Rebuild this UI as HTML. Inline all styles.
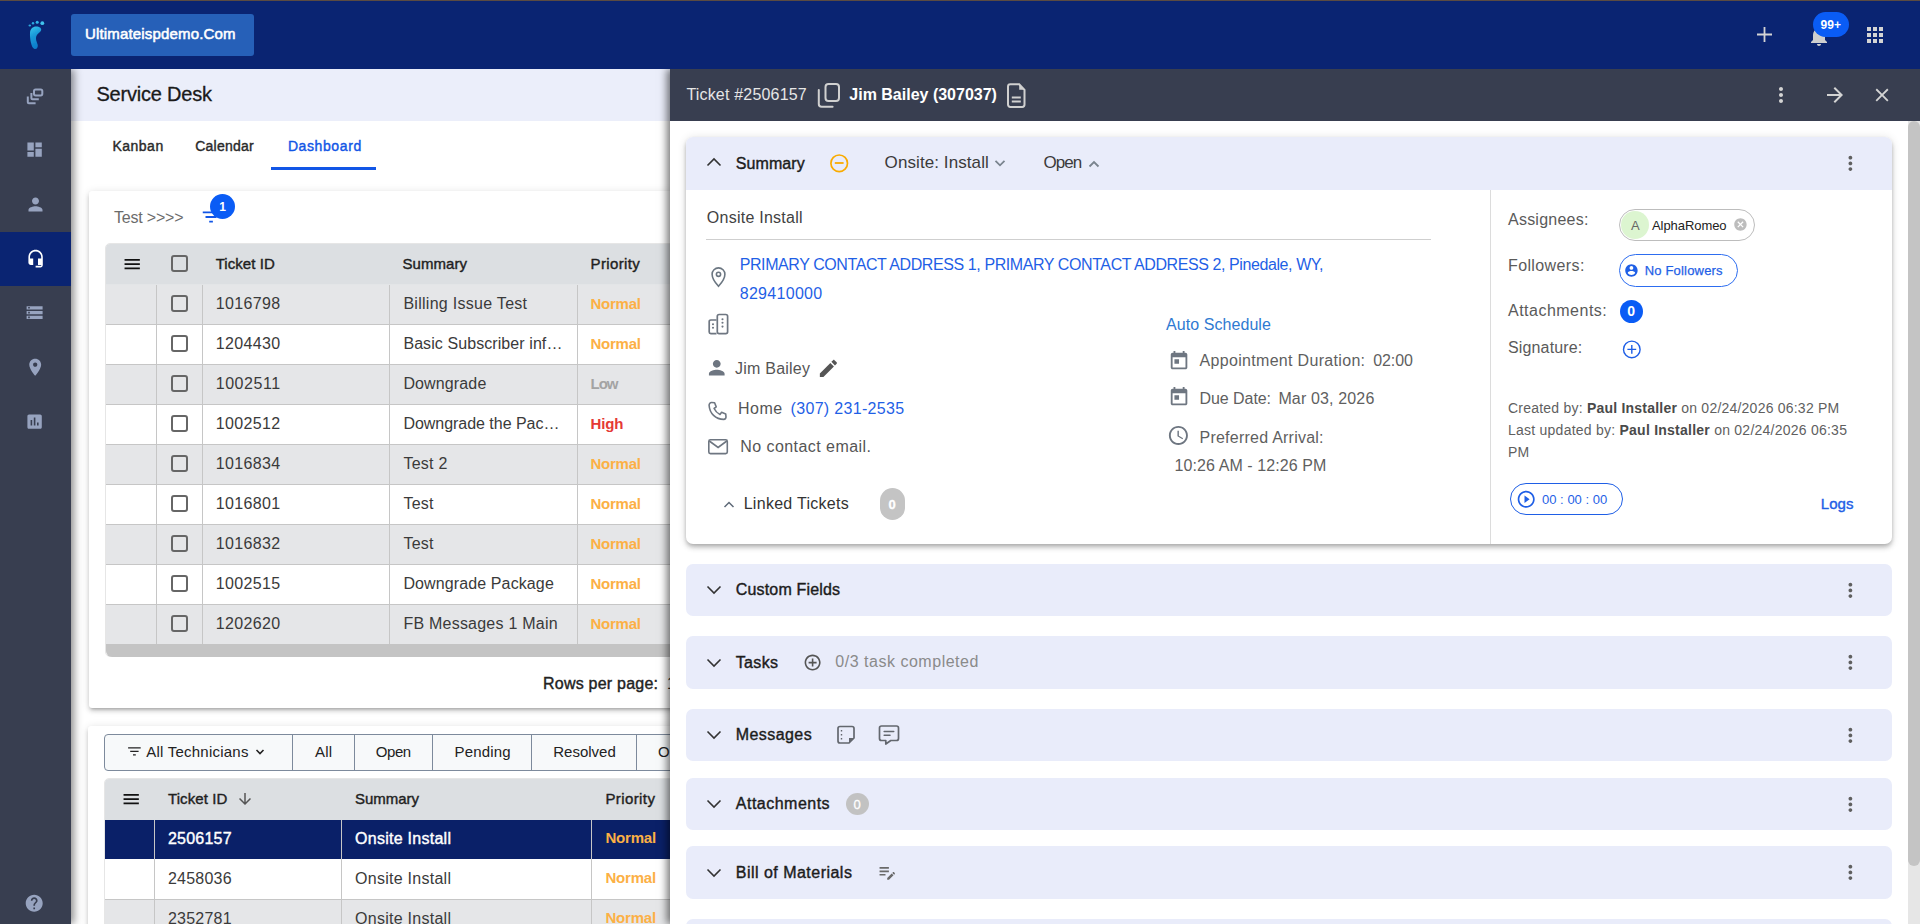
<!DOCTYPE html>
<html><head><meta charset="utf-8"><title>Service Desk</title>
<style>
*{box-sizing:border-box;margin:0;padding:0}
html,body{width:1920px;height:924px;overflow:hidden;background:#fff;font-family:"Liberation Sans",sans-serif;color:#222}
.t{position:absolute;line-height:1;white-space:nowrap}
.a{position:absolute}
svg{display:block;position:absolute}
#topbar{position:absolute;left:0;top:0;width:1920px;height:69px;background:#0a2472;border-top:1px solid #5b4b42}
#side{position:absolute;left:0;top:69px;width:71px;height:855px;background:#383e50;z-index:3;box-shadow:3px 0 8px rgba(0,0,0,0.45);clip-path:inset(0 -30px 0 0)}
.card{position:absolute;background:#fff;box-shadow:0 3px 3px -2px rgba(0,0,0,0.2),0 3px 4px 0 rgba(0,0,0,0.14),0 1px 8px 0 rgba(0,0,0,0.12);border-radius:3px}
.row{position:absolute;height:40px;border-bottom:1px solid #c6c6c6}
.g{background:#e5e6e8}
.w{background:#fff}
.vl{position:absolute;width:1px;background:#c6c6c6}
.cb{position:absolute;width:17px;height:17px;border:2px solid #666;border-radius:3px}
#drawer{position:absolute;left:670px;top:69px;width:1250px;height:855px;background:#fff;box-shadow:-3px 0 8px rgba(0,0,0,0.55);z-index:5;clip-path:inset(0 0 0 -30px)}
#dz{position:absolute;left:0;top:0;width:1920px;height:924px;z-index:6;overflow:hidden}
.acc{position:absolute;left:686px;width:1206px;background:#e9ecfa;border-radius:7px}
.dots{position:absolute}
</style></head>
<body>
<div id="topbar"></div>
<div class="a" style="left:71px;top:14px;width:183px;height:42px;background:#2660b8;border-radius:3px"></div>
<div class="t" style="left:85px;top:26px;font-size:15px;color:#fff;letter-spacing:0.164px;-webkit-text-stroke:0.4px #fff;-webkit-text-stroke:0.55px #fff">Ultimateispdemo.Com</div>
<svg style="left:24px;top:16px" width="24" height="36" viewBox="0 0 24 36">
<defs><linearGradient id="lg" x1="0" y1="0" x2="0.3" y2="1"><stop offset="0" stop-color="#3cc8ee"/><stop offset="0.45" stop-color="#1a9ad8"/><stop offset="1" stop-color="#0c7ccc"/></linearGradient>
<filter id="bl" x="-20%" y="-20%" width="140%" height="140%"><feGaussianBlur stdDeviation="0.35"/></filter></defs>
<g filter="url(#bl)">
<ellipse cx="5.8" cy="9.5" rx="1.3" ry="0.9" fill="#2fa6dc"/><circle cx="9" cy="7.3" r="1.2" fill="#2aa9e0"/><circle cx="13.2" cy="6.2" r="1.5" fill="#33b6e8"/><circle cx="18.3" cy="7.2" r="1.9" fill="#40c3ee"/>
<path d="M6 16.8C6.3 12.5 9.2 10.4 12.2 10.5c3.3.1 5.3 1.6 5 3.6-.3 1.6-1.8 2.3-3.2 3.6-1.7 1.6-2.4 3.8-1.8 6.5.5 2.2 1.6 3.7 1.6 5.6 0 2.3-1.6 3.6-3.2 3.2-1.8-.5-2.8-2.8-3.6-6C6.2 23.8 5.8 20 6 16.8z" fill="url(#lg)"/>
</g>
</svg>
<svg style="left:1756px;top:26px" width="17" height="17" viewBox="0 0 17 17"><path d="M1 8.5h15M8.5 1v15" stroke="#d4d4d4" stroke-width="1.8"/></svg>
<svg style="left:1807px;top:24px" width="24" height="24" viewBox="0 0 24 24"><path fill="#cfcfcf" d="M12 22c1.1 0 2-.9 2-2h-4c0 1.1.89 2 2 2zm6-6v-5c0-3.07-1.64-5.64-4.5-6.32V4c0-.83-.67-1.5-1.5-1.5s-1.5.67-1.5 1.5v.68C7.63 5.36 6 7.92 6 11v5l-2 2v1h16v-1l-2-2z"/></svg>
<div class="a" style="left:1813px;top:12px;width:36px;height:25px;border-radius:12.5px;background:#0a5cf5"></div>
<div class="t" style="left:1820.6px;top:19px;font-size:12px;color:#fff;font-weight:bold;letter-spacing:0.026px">99+</div>
<svg style="left:1863px;top:23px" width="24" height="24" viewBox="0 0 24 24"><path fill="#d4d4d4" d="M4 8h4V4H4v4zm6 12h4v-4h-4v4zm-6 0h4v-4H4v4zm0-6h4v-4H4v4zm6 0h4v-4h-4v4zm6-10v4h4V4h-4zm-6 4h4V4h-4v4zm6 6h4v-4h-4v4zm0 6h4v-4h-4v4z"/></svg>
<div id="side">
<div class="a" style="left:0;top:163px;width:71px;height:54px;background:#0a2472"></div>
<svg style="left:26px;top:18px" width="18" height="18" viewBox="0 0 18 18"><g fill="none" stroke="#97a3bf" stroke-width="2" stroke-linecap="butt"><rect x="8" y="2.4" width="8.3" height="6" rx="1.6"/><path d="M5.4 6v5.2c0 .6.4 1 1 1h6.4"/><path d="M1.8 9.5v5.8c0 .6.4 1 1 1h6.8"/></g></svg>
<svg style="left:23px;top:69px;transform:scale(0.8);transform-origin:0 0;left:25.4px;top:71.4px" width="24" height="24" viewBox="0 0 24 24"><path fill="#97a3bf" d="M3 13h8V3H3v10zm0 8h8v-6H3v6zm10 0h8V11h-8v10zm0-18v6h8V3h-8z"/></svg>
<svg style="left:23px;top:123px;transform:scale(0.875);transform-origin:0 0;left:24.5px;top:124.5px" width="24" height="24" viewBox="0 0 24 24"><path fill="#97a3bf" d="M12 12c2.21 0 4-1.79 4-4s-1.79-4-4-4-4 1.79-4 4 1.79 4 4 4zm0 2c-2.67 0-8 1.34-8 4v2h16v-2c0-2.66-5.33-4-8-4z"/></svg>
<svg style="left:23px;top:177px;transform:scale(0.8);transform-origin:0 0;left:25.5px;top:179.5px" width="24" height="24" viewBox="0 0 24 24"><path fill="#ffffff" d="M12 1c-4.97 0-9 4.03-9 9v7c0 1.66 1.34 3 3 3h3v-8H5v-2c0-3.87 3.13-7 7-7s7 3.13 7 7v2h-4v8h4v1h-7v2h6c1.66 0 3-1.34 3-3V10c0-4.97-4.03-9-9-9z"/></svg>
<svg style="left:23px;top:231px;transform:scale(0.8);transform-origin:0 0;left:25.3px;top:234px" width="24" height="24" viewBox="0 0 24 24"><path fill="#97a3bf" d="M2 20h20v-4H2v4zm2-3h2v2H4v-2zM2 4v4h20V4H2zm4 3H4V5h2v2zm-4 7h20v-4H2v4zm2-3h2v2H4v-2z"/></svg>
<svg style="left:23px;top:285px;transform:scale(0.85);transform-origin:0 0;left:24.8px;top:288.4px" width="24" height="24" viewBox="0 0 24 24"><path fill="#97a3bf" d="M12 2C8.13 2 5 5.13 5 9c0 5.25 7 13 7 13s7-7.75 7-13c0-3.87-3.13-7-7-7zm0 9.5c-1.38 0-2.5-1.12-2.5-2.5s1.12-2.5 2.5-2.5 2.5 1.12 2.5 2.5-1.12 2.5-2.5 2.5z"/></svg>
<svg style="left:23px;top:339px;transform:scale(0.8);transform-origin:0 0;left:25.2px;top:342.5px" width="24" height="24" viewBox="0 0 24 24"><path fill="#97a3bf" d="M19 3H5c-1.1 0-2 .9-2 2v14c0 1.1.9 2 2 2h14c1.1 0 2-.9 2-2V5c0-1.1-.9-2-2-2zM9 17H7v-7h2v7zm4 0h-2V7h2v10zm4 0h-2v-4h2v4z"/></svg>
<svg style="left:23px;top:823px;transform:scale(0.85);transform-origin:0 0;left:23.8px;top:824.3px" width="24" height="24" viewBox="0 0 24 24"><path fill="#97a3bf" d="M12 2C6.48 2 2 6.48 2 12s4.48 10 10 10 10-4.48 10-10S17.52 2 12 2zm1 17h-2v-2h2v2zm2.07-7.75l-.9.92C13.45 12.9 13 13.5 13 15h-2v-.5c0-1.1.45-2.1 1.17-2.83l1.24-1.26c.37-.36.59-.86.59-1.41 0-1.1-.9-2-2-2s-2 .9-2 2H8c0-2.21 1.79-4 4-4s4 1.79 4 4c0 .88-.36 1.68-.93 2.25z"/></svg>
</div>
<div class="a" style="left:71px;top:69px;width:1849px;height:52px;background:#ebeefa"></div>
<div class="t" style="left:96.4px;top:84px;font-size:20px;color:#1a1a1a;letter-spacing:-0.192px;-webkit-text-stroke:0.4px #1a1a1a;-webkit-text-stroke:0.3px #1a1a1a">Service Desk</div>
<div class="t" style="left:112.4px;top:139px;font-size:14px;color:#2a2a2a;letter-spacing:0.504px;-webkit-text-stroke:0.4px #2a2a2a">Kanban</div>
<div class="t" style="left:195.2px;top:139px;font-size:14px;color:#2a2a2a;letter-spacing:0.236px;-webkit-text-stroke:0.4px #2a2a2a">Calendar</div>
<div class="t" style="left:287.9px;top:139px;font-size:14px;color:#1256e6;letter-spacing:0.600px;-webkit-text-stroke:0.4px #1256e6">Dashboard</div>
<div class="a" style="left:271px;top:167px;width:105px;height:3px;background:#1256e6"></div>
<div class="card" style="left:89px;top:191px;width:1000px;height:517px"></div>
<div class="t" style="left:114px;top:210px;font-size:16px;color:#6b6b6b;letter-spacing:-0.200px">Test &gt;&gt;&gt;&gt;</div>
<svg style="left:201px;top:205px;transform:scale(0.92);transform-origin:0 0;left:200.2px;top:206.3px" width="24" height="24" viewBox="0 0 24 24"><path fill="#1256e6" d="M10 18h4v-2h-4v2zM3 6v2h18V6H3zm3 7h12v-2H6v2z"/></svg>
<div class="a" style="left:210px;top:194px;width:25px;height:25px;border-radius:50%;background:#0a5cf5"></div>
<div class="t" style="left:219.2px;top:201px;font-size:12px;color:#fff;font-weight:bold">1</div>
<div class="a" style="left:105px;top:243px;width:702px;height:414px;border:1px solid #e6e6e6;border-radius:5px"></div>
<div class="a" style="left:106px;top:244px;width:700px;height:40px;background:#dcdfe2;border-radius:4px 4px 0 0"></div>
<div class="a" style="left:106px;top:284px;width:700px;height:1px;background:#e3e5e7"></div>
<svg style="left:120px;top:252px;transform:scale(0.85);transform-origin:0 0;left:121.8px;top:254.2px" width="24" height="24" viewBox="0 0 24 24"><path fill="#111" d="M3 18h18v-2H3v2zm0-5h18v-2H3v2zm0-7v2h18V6H3z"/></svg>
<div class="cb" style="left:171px;top:255px"></div>
<div class="t" style="left:215.7px;top:256px;font-size:15px;color:#1f1f1f;letter-spacing:0.052px;-webkit-text-stroke:0.4px #1f1f1f">Ticket ID</div>
<div class="t" style="left:402.5px;top:256px;font-size:15px;color:#1f1f1f;letter-spacing:0.054px;-webkit-text-stroke:0.4px #1f1f1f">Summary</div>
<div class="t" style="left:590.5px;top:256px;font-size:15px;color:#1f1f1f;letter-spacing:0.376px;-webkit-text-stroke:0.4px #1f1f1f">Priority</div>
<div class="row g" style="left:106px;top:285px;width:700px"></div>
<div class="cb" style="left:171px;top:295px"></div>
<div class="t" style="left:215.7px;top:296px;font-size:16px;color:#3a3a3a;letter-spacing:0.352px">1016798</div>
<div class="t" style="left:403.4px;top:296px;font-size:16px;color:#3a3a3a;letter-spacing:0.281px">Billing Issue Test</div>
<div class="t" style="left:590.5px;top:296px;font-size:15px;color:#fcb045;font-weight:bold;letter-spacing:-0.242px">Normal</div>
<div class="row w" style="left:106px;top:325px;width:700px"></div>
<div class="cb" style="left:171px;top:335px"></div>
<div class="t" style="left:215.7px;top:336px;font-size:16px;color:#3a3a3a;letter-spacing:0.352px">1204430</div>
<div class="t" style="left:403.4px;top:336px;font-size:16px;color:#3a3a3a;letter-spacing:0.080px">Basic Subscriber inf…</div>
<div class="t" style="left:590.5px;top:336px;font-size:15px;color:#fcb045;font-weight:bold;letter-spacing:-0.242px">Normal</div>
<div class="row g" style="left:106px;top:365px;width:700px"></div>
<div class="cb" style="left:171px;top:375px"></div>
<div class="t" style="left:215.7px;top:376px;font-size:16px;color:#3a3a3a;letter-spacing:0.549px">1002511</div>
<div class="t" style="left:403.4px;top:376px;font-size:16px;color:#3a3a3a;letter-spacing:0.134px">Downgrade</div>
<div class="t" style="left:590.5px;top:376px;font-size:15px;color:#a3a3a3;font-weight:bold;letter-spacing:-1.013px">Low</div>
<div class="row w" style="left:106px;top:405px;width:700px"></div>
<div class="cb" style="left:171px;top:415px"></div>
<div class="t" style="left:215.7px;top:416px;font-size:16px;color:#3a3a3a;letter-spacing:0.352px">1002512</div>
<div class="t" style="left:403.4px;top:416px;font-size:16px;color:#3a3a3a;letter-spacing:-0.031px">Downgrade the Pac…</div>
<div class="t" style="left:590.5px;top:416px;font-size:15px;color:#e53935;font-weight:bold;letter-spacing:-0.121px">High</div>
<div class="row g" style="left:106px;top:445px;width:700px"></div>
<div class="cb" style="left:171px;top:455px"></div>
<div class="t" style="left:215.7px;top:456px;font-size:16px;color:#3a3a3a;letter-spacing:0.352px">1016834</div>
<div class="t" style="left:403.4px;top:456px;font-size:16px;color:#3a3a3a;letter-spacing:0.242px">Test 2</div>
<div class="t" style="left:590.5px;top:456px;font-size:15px;color:#fcb045;font-weight:bold;letter-spacing:-0.242px">Normal</div>
<div class="row w" style="left:106px;top:485px;width:700px"></div>
<div class="cb" style="left:171px;top:495px"></div>
<div class="t" style="left:215.7px;top:496px;font-size:16px;color:#3a3a3a;letter-spacing:0.352px">1016801</div>
<div class="t" style="left:403.4px;top:496px;font-size:16px;color:#3a3a3a;letter-spacing:0.267px">Test</div>
<div class="t" style="left:590.5px;top:496px;font-size:15px;color:#fcb045;font-weight:bold;letter-spacing:-0.242px">Normal</div>
<div class="row g" style="left:106px;top:525px;width:700px"></div>
<div class="cb" style="left:171px;top:535px"></div>
<div class="t" style="left:215.7px;top:536px;font-size:16px;color:#3a3a3a;letter-spacing:0.352px">1016832</div>
<div class="t" style="left:403.4px;top:536px;font-size:16px;color:#3a3a3a;letter-spacing:0.267px">Test</div>
<div class="t" style="left:590.5px;top:536px;font-size:15px;color:#fcb045;font-weight:bold;letter-spacing:-0.242px">Normal</div>
<div class="row w" style="left:106px;top:565px;width:700px"></div>
<div class="cb" style="left:171px;top:575px"></div>
<div class="t" style="left:215.7px;top:576px;font-size:16px;color:#3a3a3a;letter-spacing:0.352px">1002515</div>
<div class="t" style="left:403.4px;top:576px;font-size:16px;color:#3a3a3a;letter-spacing:0.116px">Downgrade Package</div>
<div class="t" style="left:590.5px;top:576px;font-size:15px;color:#fcb045;font-weight:bold;letter-spacing:-0.242px">Normal</div>
<div class="row g" style="left:106px;top:605px;width:700px"></div>
<div class="cb" style="left:171px;top:615px"></div>
<div class="t" style="left:215.7px;top:616px;font-size:16px;color:#3a3a3a;letter-spacing:0.352px">1202620</div>
<div class="t" style="left:403.4px;top:616px;font-size:16px;color:#3a3a3a;letter-spacing:0.230px">FB Messages 1 Main</div>
<div class="t" style="left:590.5px;top:616px;font-size:15px;color:#fcb045;font-weight:bold;letter-spacing:-0.242px">Normal</div>
<div class="vl" style="left:156px;top:285px;height:359px"></div>
<div class="vl" style="left:202px;top:285px;height:359px"></div>
<div class="vl" style="left:389px;top:285px;height:359px"></div>
<div class="vl" style="left:577px;top:285px;height:359px"></div>
<div class="a" style="left:106px;top:644px;width:700px;height:13px;background:#c4c4c4;border-radius:0 0 0 6px"></div>
<div class="t" style="left:543px;top:676px;font-size:16px;color:#222;letter-spacing:0.222px;-webkit-text-stroke:0.4px #222">Rows per page:</div>
<div class="t" style="left:667px;top:676px;font-size:16px;color:#222">10</div>
<div class="card" style="left:88px;top:726px;width:1000px;height:400px"></div>
<div class="a" style="left:104px;top:734px;width:700px;height:37px;border:1px solid #7d8a9c;border-radius:4px;background:#f7f9fa"></div>
<div class="a" style="left:292px;top:734px;width:1px;height:37px;background:#7d8a9c"></div>
<div class="a" style="left:354px;top:734px;width:1px;height:37px;background:#7d8a9c"></div>
<div class="a" style="left:432px;top:734px;width:1px;height:37px;background:#7d8a9c"></div>
<div class="a" style="left:531px;top:734px;width:1px;height:37px;background:#7d8a9c"></div>
<div class="a" style="left:636px;top:734px;width:1px;height:37px;background:#7d8a9c"></div>
<svg style="left:125px;top:739px;transform:scale(0.7);transform-origin:0 0;left:125.5px;top:743px" width="24" height="24" viewBox="0 0 24 24"><path fill="#222" d="M10 18h4v-2h-4v2zM3 6v2h18V6H3zm3 7h12v-2H6v2z"/></svg>
<div class="t" style="left:146.3px;top:744px;font-size:15px;color:#222;letter-spacing:0.228px">All Technicians</div>
<svg style="left:254px;top:746px" width="12" height="12" viewBox="0 0 12 12"><path d="M2.5 4l3.5 3.5L9.5 4" fill="none" stroke="#222" stroke-width="1.6"/></svg>
<div class="t" style="left:315px;top:744px;font-size:15px;color:#222;letter-spacing:0.181px">All</div>
<div class="t" style="left:375.8px;top:744px;font-size:15px;color:#222;letter-spacing:-0.451px">Open</div>
<div class="t" style="left:454.6px;top:744px;font-size:15px;color:#222;letter-spacing:0.149px">Pending</div>
<div class="t" style="left:553.3px;top:744px;font-size:15px;color:#222;letter-spacing:-0.013px">Resolved</div>
<div class="t" style="left:658px;top:744px;font-size:15px;color:#222">On Hold</div>
<div class="a" style="left:104px;top:778px;width:702px;height:200px;border:1px solid #e6e6e6;border-radius:5px"></div>
<div class="a" style="left:105px;top:779px;width:700px;height:41px;background:#dcdfe2;border-radius:4px 4px 0 0"></div>
<svg style="left:120px;top:788px;transform:scale(0.85);transform-origin:0 0;left:120.5px;top:789px" width="24" height="24" viewBox="0 0 24 24"><path fill="#111" d="M3 18h18v-2H3v2zm0-5h18v-2H3v2zm0-7v2h18V6H3z"/></svg>
<div class="t" style="left:168px;top:791px;font-size:15px;color:#1f1f1f;letter-spacing:0.090px;-webkit-text-stroke:0.4px #1f1f1f">Ticket ID</div>
<svg style="left:233px;top:787px;transform:scale(0.75);transform-origin:0 0;left:236px;top:790px" width="24" height="24" viewBox="0 0 24 24"><path fill="#555" d="M20 12l-1.41-1.41L13 16.17V4h-2v12.17l-5.58-5.59L4 12l8 8 8-8z"/></svg>
<div class="t" style="left:355px;top:791px;font-size:15px;color:#1f1f1f;letter-spacing:-0.012px;-webkit-text-stroke:0.4px #1f1f1f">Summary</div>
<div class="t" style="left:605.4px;top:791px;font-size:15px;color:#1f1f1f;letter-spacing:0.404px;-webkit-text-stroke:0.4px #1f1f1f">Priority</div>
<div class="row" style="left:105px;top:820px;width:700px;background:#0a2068;border-bottom-color:#fff"></div>
<div class="t" style="left:168px;top:831px;font-size:16px;color:#fff;letter-spacing:0.218px;-webkit-text-stroke:0.4px #fff">2506157</div>
<div class="t" style="left:355px;top:831px;font-size:16px;color:#fff;letter-spacing:0.267px;-webkit-text-stroke:0.4px #fff">Onsite Install</div>
<div class="t" style="left:605.4px;top:830px;font-size:15px;color:#fcb045;font-weight:bold;letter-spacing:-0.182px">Normal</div>
<div class="row w" style="left:105px;top:860px;width:700px"></div>
<div class="t" style="left:168px;top:871px;font-size:16px;color:#3a3a3a;letter-spacing:0.218px">2458036</div>
<div class="t" style="left:355px;top:871px;font-size:16px;color:#3a3a3a;letter-spacing:0.267px">Onsite Install</div>
<div class="t" style="left:605.4px;top:870px;font-size:15px;color:#fcb045;font-weight:bold;letter-spacing:-0.182px">Normal</div>
<div class="row g" style="left:105px;top:900px;width:700px"></div>
<div class="t" style="left:168px;top:911px;font-size:16px;color:#3a3a3a;letter-spacing:0.218px">2352781</div>
<div class="t" style="left:355px;top:911px;font-size:16px;color:#3a3a3a;letter-spacing:0.267px">Onsite Install</div>
<div class="t" style="left:605.4px;top:910px;font-size:15px;color:#fcb045;font-weight:bold;letter-spacing:-0.182px">Normal</div>
<div class="vl" style="left:154px;top:820px;height:110px"></div>
<div class="vl" style="left:341px;top:820px;height:110px"></div>
<div class="vl" style="left:591px;top:820px;height:110px"></div>
<div id="drawer"></div>
<div id="dz">
<div class="a" style="left:670px;top:69px;width:1250px;height:52px;background:#383e50"></div>
<div class="t" style="left:686.4px;top:87px;font-size:16px;color:#e6e6e6;letter-spacing:0.185px">Ticket #2506157</div>
<svg style="left:816px;top:82px" width="26" height="27" viewBox="0 0 26 27"><g fill="none" stroke="#d0d0d0" stroke-width="2" stroke-linecap="round"><rect x="9.5" y="2" width="13.5" height="17" rx="3"/><path d="M2.8 8v14c0 1.6 1.1 2.8 2.8 2.8h11"/></g></svg>
<div class="t" style="left:849.3px;top:87px;font-size:16px;color:#fff;font-weight:bold;letter-spacing:-0.001px">Jim Bailey (307037)</div>
<svg style="left:1006px;top:82px" width="21" height="27" viewBox="0 0 21 27"><path d="M4.3 2.2h8.9l5.3 5.6v14.8c0 1.3-1 2.4-2.3 2.4H4.3c-1.3 0-2.3-1.1-2.3-2.4V4.6c0-1.4 1-2.4 2.3-2.4z" fill="none" stroke="#d0d0d0" stroke-width="2"/><path d="M13.2 2.2v5.6h5.3z" fill="#d0d0d0"/><path d="M5.8 15.5h9M5.8 19.5h9" stroke="#d0d0d0" stroke-width="2"/></svg>
<svg style="left:1769px;top:83px" width="24" height="24" viewBox="0 0 24 24"><path fill="#d4d4d4" d="M12 8c1.1 0 2-.9 2-2s-.9-2-2-2-2 .9-2 2 .9 2 2 2zm0 2c-1.1 0-2 .9-2 2s.9 2 2 2 2-.9 2-2-.9-2-2-2zm0 6c-1.1 0-2 .9-2 2s.9 2 2 2 2-.9 2-2-.9-2-2-2z"/></svg>
<svg style="left:1823px;top:83px" width="24" height="24" viewBox="0 0 24 24"><path fill="#d4d4d4" d="M12 4l-1.41 1.41L16.17 11H4v2h12.17l-5.58 5.59L12 20l8-8z"/></svg>
<svg style="left:1870px;top:83px;transform:scale(0.92);transform-origin:0 0;left:1871px;top:84.4px" width="24" height="24" viewBox="0 0 24 24"><path fill="#d4d4d4" d="M19 6.41L17.59 5 12 10.59 6.41 5 5 6.41 10.59 12 5 17.59 6.41 19 12 13.41 17.59 19 19 17.59 13.41 12z"/></svg>
<div class="a" style="left:1908px;top:121px;width:12px;height:803px;background:#e6e6e6"></div>
<div class="a" style="left:1908px;top:121px;width:12px;height:745px;background:#c4c4c4;border-radius:6px"></div>
<div class="a" style="left:686px;top:137px;width:1206px;height:407px;background:#fff;border-radius:7px;box-shadow:0 2px 4px -1px rgba(0,0,0,0.2),0 4px 5px 0 rgba(0,0,0,0.14),0 1px 10px 0 rgba(0,0,0,0.12)"></div>
<div class="a" style="left:686px;top:137px;width:1206px;height:53px;background:#e9ecfa;border-radius:7px 7px 0 0"></div>
<svg style="left:704px;top:155px" width="20" height="14" viewBox="0 0 20 14"><path d="M3.5 10.5L10 4l6.5 6.5" fill="none" stroke="#333" stroke-width="1.6"/></svg>
<div class="t" style="left:735.7px;top:156px;font-size:16px;color:#1c1c1c;letter-spacing:0.108px;-webkit-text-stroke:0.4px #1c1c1c">Summary</div>
<svg style="left:828px;top:152px" width="23" height="23" viewBox="0 0 23 23"><circle cx="11.2" cy="11.3" r="8.3" fill="none" stroke="#f9ab00" stroke-width="1.7"/><path d="M6.8 11h8.8" stroke="#f9ab00" stroke-width="1.8"/></svg>
<div class="t" style="left:884.6px;top:154px;font-size:17px;color:#3b3b3b;letter-spacing:0.085px">Onsite: Install</div>
<svg style="left:993px;top:158px" width="14" height="10" viewBox="0 0 14 10"><path d="M2.5 2.8l4.5 4.5 4.5-4.5" fill="none" stroke="#7a848e" stroke-width="1.8"/></svg>
<div class="t" style="left:1043.4px;top:154px;font-size:17px;color:#3b3b3b;letter-spacing:-0.944px">Open</div>
<svg style="left:1087px;top:157px" width="14" height="12" viewBox="0 0 14 12"><path d="M2.5 9.5l4.5-4.5 4.5 4.5" fill="none" stroke="#7a848e" stroke-width="1.8"/></svg>
<svg style="left:1838px;top:151px;transform:scale(0.95);transform-origin:0 0;left:1838.6px;top:151.6px" width="24" height="24" viewBox="0 0 24 24"><path fill="#5f5f5f" d="M12 8c1.1 0 2-.9 2-2s-.9-2-2-2-2 .9-2 2 .9 2 2 2zm0 2c-1.1 0-2 .9-2 2s.9 2 2 2 2-.9 2-2-.9-2-2-2zm0 6c-1.1 0-2 .9-2 2s.9 2 2 2 2-.9 2-2-.9-2-2-2z"/></svg>
<div class="t" style="left:706.8px;top:210px;font-size:16px;color:#424242;letter-spacing:0.252px">Onsite Install</div>
<div class="a" style="left:706px;top:239px;width:725px;height:1px;background:#cfcfcf"></div>
<svg style="left:709px;top:266px" width="19" height="23" viewBox="0 0 19 23"><path d="M9.5 20.3S3.1 13.4 3.1 8.3a6.4 6.4 0 0 1 12.8 0c0 5.1-6.4 12-6.4 12z" fill="none" stroke="#6b7681" stroke-width="1.6"/><circle cx="9.5" cy="8.3" r="2.1" fill="none" stroke="#6b7681" stroke-width="1.6"/></svg>
<div class="t" style="left:739.7px;top:257px;font-size:16px;color:#1f5fe6;letter-spacing:-0.410px">PRIMARY CONTACT ADDRESS 1, PRIMARY CONTACT ADDRESS 2, Pinedale, WY,</div>
<div class="t" style="left:739.7px;top:286px;font-size:16px;color:#1f5fe6;letter-spacing:0.302px">829410000</div>
<svg style="left:707px;top:313px" width="23" height="22" viewBox="0 0 23 22"><g fill="none" stroke="#6e7681" stroke-width="1.7"><path d="M9.5 7H3.8c-.9 0-1.6.7-1.6 1.6v10.4c0 .9.7 1.6 1.6 1.6h5.7"/><rect x="10.3" y="1.5" width="10.3" height="19.1" rx="1.8"/></g><g fill="#6e7681"><circle cx="6" cy="11.2" r="1.05"/><circle cx="6" cy="14.8" r="1.05"/><circle cx="15.5" cy="6.2" r="1.05"/><circle cx="15.5" cy="9.8" r="1.05"/><circle cx="15.5" cy="13.6" r="1.05"/></g></svg>
<div class="t" style="left:1166px;top:317px;font-size:16px;color:#2f7ad2;letter-spacing:0.068px">Auto Schedule</div>
<svg style="left:704px;top:357px;transform:scale(0.98);transform-origin:0 0;left:704.5px;top:356.2px" width="24" height="24" viewBox="0 0 24 24"><path fill="#6e7681" d="M12 12c2.21 0 4-1.79 4-4s-1.79-4-4-4-4 1.79-4 4 1.79 4 4 4zm0 2c-2.67 0-8 1.34-8 4v2h16v-2c0-2.66-5.33-4-8-4z"/></svg>
<div class="t" style="left:735px;top:361px;font-size:16px;color:#555;letter-spacing:0.233px">Jim Bailey</div>
<svg style="left:816px;top:357px;transform:scale(0.95);transform-origin:0 0;left:816.5px;top:357.2px" width="24" height="24" viewBox="0 0 24 24"><path fill="#555" d="M3 17.25V21h3.75L17.81 9.94l-3.75-3.75L3 17.25zM20.71 7.04c.39-.39.39-1.02 0-1.41l-2.34-2.34c-.39-.39-1.02-.39-1.41 0l-1.83 1.83 3.75 3.75 1.83-1.83z"/></svg>
<svg style="left:706px;top:400px" width="23" height="23" viewBox="0 0 23 23"><path d="M5.6 2.5l3 .3 1.6 4.1-2.1 1.6c1.2 2.6 3.3 4.7 5.9 5.9l1.6-2.1 4.1 1.6.3 3c.1 1.3-.9 2.5-2.2 2.5C9.6 19.4 3.6 13.4 3.1 5.2c0-1.4 1.2-2.8 2.5-2.7z" fill="none" stroke="#6e7681" stroke-width="1.6" stroke-linejoin="round"/></svg>
<div class="t" style="left:738px;top:401px;font-size:16px;color:#555;letter-spacing:0.506px">Home</div>
<div class="t" style="left:790.6px;top:401px;font-size:16px;color:#1f5fe6;letter-spacing:0.314px">(307) 231-2535</div>
<svg style="left:706px;top:437px" width="24" height="19" viewBox="0 0 24 19"><rect x="2.8" y="2.8" width="18.5" height="13.8" rx="1.6" fill="none" stroke="#6e7681" stroke-width="1.6"/><path d="M3.3 4l8.8 6.4L20.8 4" fill="none" stroke="#6e7681" stroke-width="1.6"/></svg>
<div class="t" style="left:740.2px;top:439px;font-size:16px;color:#555;letter-spacing:0.452px">No contact email.</div>
<svg style="left:722px;top:498px" width="14" height="12" viewBox="0 0 14 12"><path d="M2.5 9l4.5-4.5L11.5 9" fill="none" stroke="#5f6a78" stroke-width="1.5"/></svg>
<div class="t" style="left:743.7px;top:496px;font-size:16px;color:#333;letter-spacing:0.279px">Linked Tickets</div>
<div class="a" style="left:880px;top:488px;width:25px;height:32px;border-radius:12.5px;background:#c4c4c4"></div>
<div class="t" style="left:888.6px;top:498px;font-size:13px;color:#fff;font-weight:bold;-webkit-text-stroke:0.3px #fff">0</div>
<svg style="left:1166px;top:348px;transform:scale(0.92);transform-origin:0 0;left:1167.5px;top:350px" width="24" height="24" viewBox="0 0 24 24"><path fill="#6e7681" d="M19 3h-1V1h-2v2H8V1H6v2H5c-1.11 0-1.99.9-1.99 2L3 19c0 1.1.89 2 2 2h14c1.1 0 2-.9 2-2V5c0-1.1-.9-2-2-2zm0 16H5V8h14v11zM7 10h5v5H7z"/></svg>
<div class="t" style="left:1199.5px;top:353px;font-size:16px;color:#5f5f5f;letter-spacing:0.317px">Appointment Duration:</div>
<div class="t" style="left:1373.2px;top:353px;font-size:16px;color:#5f5f5f;letter-spacing:-0.085px">02:00</div>
<svg style="left:1166px;top:386px;transform:scale(0.92);transform-origin:0 0;left:1167.5px;top:386.3px" width="24" height="24" viewBox="0 0 24 24"><path fill="#6e7681" d="M19 3h-1V1h-2v2H8V1H6v2H5c-1.11 0-1.99.9-1.99 2L3 19c0 1.1.89 2 2 2h14c1.1 0 2-.9 2-2V5c0-1.1-.9-2-2-2zm0 16H5V8h14v11zM7 10h5v5H7z"/></svg>
<div class="t" style="left:1199.5px;top:391px;font-size:16px;color:#5f5f5f;letter-spacing:-0.062px">Due Date:</div>
<div class="t" style="left:1278.4px;top:391px;font-size:16px;color:#5f5f5f;letter-spacing:0.147px">Mar 03, 2026</div>
<svg style="left:1166px;top:423px;transform:scale(0.95);transform-origin:0 0;left:1166.6px;top:423.5px" width="24" height="24" viewBox="0 0 24 24"><path fill="#6e7681" d="M11.99 2C6.47 2 2 6.48 2 12s4.47 10 9.99 10C17.52 22 22 17.52 22 12S17.52 2 11.99 2zM12 20c-4.42 0-8-3.58-8-8s3.58-8 8-8 8 3.58 8 8-3.58 8-8 8zm.5-13H11v6l5.25 3.15.75-1.23-4.5-2.67z"/></svg>
<div class="t" style="left:1199.5px;top:430px;font-size:16px;color:#5f5f5f;letter-spacing:0.237px">Preferred Arrival:</div>
<div class="t" style="left:1174.5px;top:458px;font-size:16px;color:#5f5f5f;letter-spacing:0.091px">10:26 AM - 12:26 PM</div>
<div class="a" style="left:1490px;top:190px;width:1px;height:354px;background:#dcdcdc"></div>
<div class="t" style="left:1508px;top:212px;font-size:16px;color:#5a5a5a;letter-spacing:0.231px">Assignees:</div>
<div class="a" style="left:1619px;top:209px;width:136px;height:32px;border:1px solid #bdbdbd;border-radius:16px"></div>
<div class="a" style="left:1621px;top:211px;width:28px;height:28px;border-radius:50%;background:#dcf5d0"></div>
<div class="t" style="left:1631px;top:219px;font-size:13px;color:#666">A</div>
<div class="t" style="left:1652px;top:219px;font-size:13px;color:#222;letter-spacing:-0.070px">AlphaRomeo</div>
<svg style="left:1733px;top:217px;transform:scale(0.62);transform-origin:0 0;left:1733px;top:217px" width="24" height="24" viewBox="0 0 24 24"><path fill="#bdbdbd" d="M12 2C6.47 2 2 6.47 2 12s4.47 10 10 10 10-4.47 10-10S17.53 2 12 2zm5 13.59L15.59 17 12 13.41 8.41 17 7 15.59 10.59 12 7 8.41 8.41 7 12 10.59 15.59 7 17 8.41 13.41 12 17 15.59z"/></svg>
<div class="t" style="left:1508px;top:258px;font-size:16px;color:#5a5a5a;letter-spacing:0.382px">Followers:</div>
<div class="a" style="left:1619px;top:254px;width:119px;height:33px;border:1px solid #2d6df0;border-radius:16.5px"></div>
<svg style="left:1624px;top:262px;transform:scale(0.62);transform-origin:0 0;left:1624px;top:263px" width="24" height="24" viewBox="0 0 24 24"><path fill="#1f5fe6" d="M12 2C6.48 2 2 6.48 2 12s4.48 10 10 10 10-4.48 10-10S17.52 2 12 2zm0 3c1.66 0 3 1.34 3 3s-1.34 3-3 3-3-1.34-3-3 1.34-3 3-3zm0 14.2c-2.5 0-4.71-1.28-6-3.22.03-1.99 4-3.08 6-3.08 1.99 0 5.97 1.09 6 3.08-1.29 1.94-3.5 3.22-6 3.22z"/></svg>
<div class="t" style="left:1644.7px;top:264px;font-size:13px;color:#1f5fe6;letter-spacing:0.186px;-webkit-text-stroke:0.4px #1f5fe6;-webkit-text-stroke:0.25px #1f5fe6">No Followers</div>
<div class="t" style="left:1508px;top:303px;font-size:16px;color:#5a5a5a;letter-spacing:0.488px">Attachments:</div>
<div class="a" style="left:1620px;top:300px;width:23px;height:23px;border-radius:50%;background:#0a5cf5"></div>
<div class="t" style="left:1627.3px;top:304px;font-size:14px;color:#fff;font-weight:bold">0</div>
<div class="t" style="left:1508px;top:340px;font-size:16px;color:#5a5a5a;letter-spacing:0.145px">Signature:</div>
<svg style="left:1622px;top:339.5px" width="20" height="20" viewBox="0 0 20 20"><circle cx="9.8" cy="9.4" r="8.3" fill="none" stroke="#1f5fe6" stroke-width="1.4"/><path d="M9.8 5v8.8M5.4 9.4h8.8" stroke="#1f5fe6" stroke-width="1.4"/></svg>
<div class="t" style="left:1508px;top:401px;font-size:14px;color:#5f5f5f;letter-spacing:0.220px">Created by: <b style="color:#4a4a4a">Paul Installer</b> on 02/24/2026 06:32 PM</div>
<div class="t" style="left:1508px;top:423px;font-size:14px;color:#5f5f5f;letter-spacing:0.240px">Last updated by: <b style="color:#4a4a4a">Paul Installer</b> on 02/24/2026 06:35</div>
<div class="t" style="left:1508px;top:445px;font-size:14px;color:#5f5f5f;letter-spacing:0.050px">PM</div>
<div class="a" style="left:1510px;top:483px;width:113px;height:32px;border:1px solid #1f5fe6;border-radius:16px"></div>
<svg style="left:1515px;top:489px;transform:scale(0.85);transform-origin:0 0;left:1515.5px;top:488.5px" width="24" height="24" viewBox="0 0 24 24"><path fill="#1f5fe6" d="M10 16.5l6-4.5-6-4.5v9zM12 2C6.48 2 2 6.48 2 12s4.48 10 10 10 10-4.48 10-10S17.52 2 12 2zm0 18c-4.41 0-8-3.59-8-8s3.59-8 8-8 8 3.59 8 8-3.59 8-8 8z"/></svg>
<div class="t" style="left:1542px;top:493px;font-size:13px;color:#1f5fe6;letter-spacing:0.016px">00 : 00 : 00</div>
<div class="t" style="left:1820.8px;top:496px;font-size:15px;color:#1f5fe6;letter-spacing:0.058px;-webkit-text-stroke:0.4px #1f5fe6">Logs</div>
<div class="acc" style="top:564px;height:52px"></div>
<svg style="left:704px;top:583.0px" width="20" height="14" viewBox="0 0 20 14"><path d="M3.5 3.5L10 10l6.5-6.5" fill="none" stroke="#333" stroke-width="1.6"/></svg>
<div class="t" style="left:735.8px;top:582px;font-size:16px;color:#1c1c1c;letter-spacing:0.163px;-webkit-text-stroke:0.4px #1c1c1c">Custom Fields</div>
<svg style="left:1838px;top:578.0px;transform:scale(0.95);transform-origin:0 0;left:1838.6px;top:578.6px" width="24" height="24" viewBox="0 0 24 24"><path fill="#5f5f5f" d="M12 8c1.1 0 2-.9 2-2s-.9-2-2-2-2 .9-2 2 .9 2 2 2zm0 2c-1.1 0-2 .9-2 2s.9 2 2 2 2-.9 2-2-.9-2-2-2zm0 6c-1.1 0-2 .9-2 2s.9 2 2 2 2-.9 2-2-.9-2-2-2z"/></svg>
<div class="acc" style="top:636px;height:53px"></div>
<svg style="left:704px;top:655.5px" width="20" height="14" viewBox="0 0 20 14"><path d="M3.5 3.5L10 10l6.5-6.5" fill="none" stroke="#333" stroke-width="1.6"/></svg>
<div class="t" style="left:735.8px;top:655px;font-size:16px;color:#1c1c1c;letter-spacing:0.325px;-webkit-text-stroke:0.4px #1c1c1c">Tasks</div>
<svg style="left:1838px;top:650.5px;transform:scale(0.95);transform-origin:0 0;left:1838.6px;top:651.1px" width="24" height="24" viewBox="0 0 24 24"><path fill="#5f5f5f" d="M12 8c1.1 0 2-.9 2-2s-.9-2-2-2-2 .9-2 2 .9 2 2 2zm0 2c-1.1 0-2 .9-2 2s.9 2 2 2 2-.9 2-2-.9-2-2-2zm0 6c-1.1 0-2 .9-2 2s.9 2 2 2 2-.9 2-2-.9-2-2-2z"/></svg>
<div class="acc" style="top:709px;height:52px"></div>
<svg style="left:704px;top:728.0px" width="20" height="14" viewBox="0 0 20 14"><path d="M3.5 3.5L10 10l6.5-6.5" fill="none" stroke="#333" stroke-width="1.6"/></svg>
<div class="t" style="left:735.8px;top:727px;font-size:16px;color:#1c1c1c;letter-spacing:0.425px;-webkit-text-stroke:0.4px #1c1c1c">Messages</div>
<svg style="left:1838px;top:723.0px;transform:scale(0.95);transform-origin:0 0;left:1838.6px;top:723.6px" width="24" height="24" viewBox="0 0 24 24"><path fill="#5f5f5f" d="M12 8c1.1 0 2-.9 2-2s-.9-2-2-2-2 .9-2 2 .9 2 2 2zm0 2c-1.1 0-2 .9-2 2s.9 2 2 2 2-.9 2-2-.9-2-2-2zm0 6c-1.1 0-2 .9-2 2s.9 2 2 2 2-.9 2-2-.9-2-2-2z"/></svg>
<div class="acc" style="top:778px;height:52px"></div>
<svg style="left:704px;top:797.0px" width="20" height="14" viewBox="0 0 20 14"><path d="M3.5 3.5L10 10l6.5-6.5" fill="none" stroke="#333" stroke-width="1.6"/></svg>
<div class="t" style="left:735.8px;top:796px;font-size:16px;color:#1c1c1c;letter-spacing:0.487px;-webkit-text-stroke:0.4px #1c1c1c">Attachments</div>
<svg style="left:1838px;top:792.0px;transform:scale(0.95);transform-origin:0 0;left:1838.6px;top:792.6px" width="24" height="24" viewBox="0 0 24 24"><path fill="#5f5f5f" d="M12 8c1.1 0 2-.9 2-2s-.9-2-2-2-2 .9-2 2 .9 2 2 2zm0 2c-1.1 0-2 .9-2 2s.9 2 2 2 2-.9 2-2-.9-2-2-2zm0 6c-1.1 0-2 .9-2 2s.9 2 2 2 2-.9 2-2-.9-2-2-2z"/></svg>
<div class="acc" style="top:846px;height:53px"></div>
<svg style="left:704px;top:865.5px" width="20" height="14" viewBox="0 0 20 14"><path d="M3.5 3.5L10 10l6.5-6.5" fill="none" stroke="#333" stroke-width="1.6"/></svg>
<div class="t" style="left:735.8px;top:865px;font-size:16px;color:#1c1c1c;letter-spacing:0.476px;-webkit-text-stroke:0.4px #1c1c1c">Bill of Materials</div>
<svg style="left:1838px;top:860.5px;transform:scale(0.95);transform-origin:0 0;left:1838.6px;top:861.1px" width="24" height="24" viewBox="0 0 24 24"><path fill="#5f5f5f" d="M12 8c1.1 0 2-.9 2-2s-.9-2-2-2-2 .9-2 2 .9 2 2 2zm0 2c-1.1 0-2 .9-2 2s.9 2 2 2 2-.9 2-2-.9-2-2-2zm0 6c-1.1 0-2 .9-2 2s.9 2 2 2 2-.9 2-2-.9-2-2-2z"/></svg>
<div class="acc" style="top:919px;height:60px"></div>
<svg style="left:802px;top:651px;transform:scale(0.8);transform-origin:0 0;left:803.4px;top:653.4px" width="24" height="24" viewBox="0 0 24 24"><path fill="#555" d="M13 7h-2v4H7v2h4v4h2v-4h4v-2h-4V7zm-1-5C6.48 2 2 6.48 2 12s4.48 10 10 10 10-4.48 10-10S17.52 2 12 2zm0 18c-4.41 0-8-3.59-8-8s3.59-8 8-8 8 3.59 8 8-3.59 8-8 8z"/></svg>
<div class="t" style="left:835.3px;top:654px;font-size:16px;color:#8a8a8a;letter-spacing:0.518px">0/3 task completed</div>
<svg style="left:835px;top:724px" width="22" height="22" viewBox="0 0 22 22"><path d="M5 2.5h12c1.2 0 2 .8 2 2v9.5l-5 5H5c-1.2 0-2-.8-2-2V4.5c0-1.2.8-2 2-2z" fill="none" stroke="#63676e" stroke-width="1.7"/><path d="M14 19v-5h5z" fill="#63676e"/><path d="M6.5 6v1.5M6.5 10v1.5M6.5 14v1.5" stroke="#63676e" stroke-width="1.4"/></svg>
<svg style="left:877px;top:723px" width="24" height="24" viewBox="0 0 24 24"><path d="M4.5 3h15c1.1 0 2 .9 2 2v10.5c0 1.1-.9 2-2 2H13.8L8.8 21v-3.5H4.5c-1.1 0-2-.9-2-2V5c0-1.1.9-2 2-2z" fill="none" stroke="#63676e" stroke-width="1.7" stroke-linejoin="round"/><path d="M7.2 8.5h9.5M7.2 12.3h5.8" stroke="#63676e" stroke-width="1.6" stroke-linecap="round"/></svg>
<div class="a" style="left:846px;top:793px;width:23px;height:22px;border-radius:50%;background:#c2c2c2"></div>
<div class="t" style="left:853.5px;top:798px;font-size:13px;color:#fff;-webkit-text-stroke:0.3px #fff">0</div>
<svg style="left:876px;top:861px;transform:scale(0.85);transform-origin:0 0;left:876.5px;top:862px" width="24" height="24" viewBox="0 0 24 24"><path fill="#6a6a6a" d="M3 10h11v2H3v-2zm0-2h11V6H3v2zm0 8h7v-2H3v2zm15.01-3.13.71-.71c.39-.39 1.02-.39 1.41 0l.71.71c.39.39.39 1.02 0 1.41l-.71.71-2.12-2.12zm-.71.71-5.3 5.3V21h2.12l5.3-5.3-2.12-2.12z"/></svg>
</div>
</body></html>
